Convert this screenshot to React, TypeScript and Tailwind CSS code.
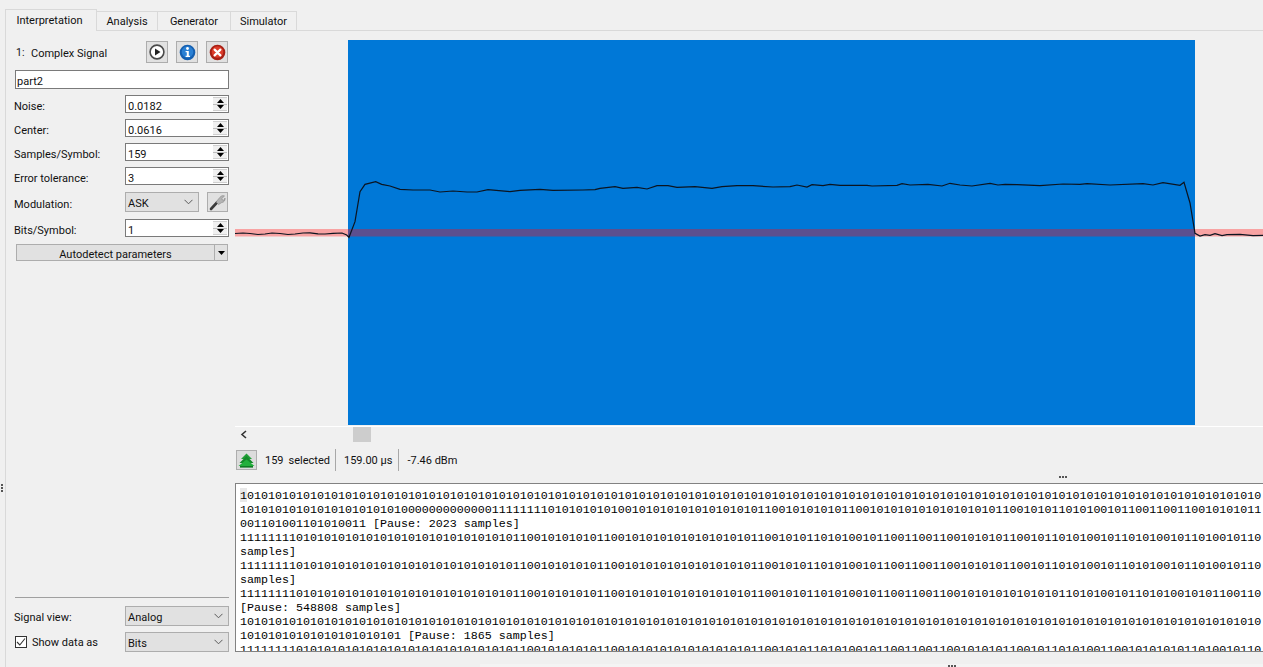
const uiFont = "[font-family:Roboto,sans-serif] text-[11px] leading-none text-[#111]";

const r = (s: string, n: number) => s.repeat(n);
const head = "11111111" + r("01", 15) + "0" + "11" + "00" + "101010101" + "1" + "00";
const mid = r("10", 9) + "1" + "1001010110101001";
const lines = [
  r("10", 73),
  r("10", 12) + "000000000000" + "1111111" + r("10", 6) + r("01", 10) + "100" + "10101010" + "1100" + r("10", 9) + "1" + "1001010110101001011001100110010101011",
  "001101001101010011 [Pause: 2023 samples]",
  head + mid + "01100110011001010101100101101010010110101001011010010110",
  "samples]",
  head + mid + "01100110011001010101100101101010010110101001011010010110",
  "samples]",
  head + mid + "01100110011001010101010101011010100101101010010101100110",
  "[Pause: 548808 samples]",
  r("10", 73),
  "10101010101010101010101 [Pause: 1865 samples]",
  head + mid + "01100110011001010101100101101010011001010101011010010110",
];

const trace = [
  [235, 233.5], [243, 233], [250, 233.5], [258, 234.5], [265, 234], [272, 233], [280, 233.5], [288, 234.5], [295, 234], [303, 233], [310, 232.8], [318, 233.8], [325, 234], [333, 233.4], [342, 233], [346.7, 235], [349, 237.3],
  [355, 221.7], [360, 191.7], [365, 184.3], [375.7, 181.7], [381.7, 184.3], [390, 186], [400, 189.3], [413, 190], [430, 190], [440, 192], [453, 191], [467, 192], [477, 192], [488, 189.7], [510, 191.7],
  [520, 190.3], [540, 189.3], [553, 190.3], [583, 190], [595, 189.7], [600, 188.3], [615, 186.7], [623, 188.3], [637, 187.3], [647, 189], [657, 185.7], [668, 185.7], [677, 187.3], [695, 186.7], [712, 188.3], [722, 186.7], [737, 185.7], [753, 185.7], [773, 187], [790, 186.7], [797, 185], [807, 187],
  [812, 184.7], [823, 185.7], [830, 184.3], [840, 185.3], [867, 185.3], [872, 186], [897, 185.3], [902, 183.7], [910, 185], [928, 184.3], [942, 186], [950, 183.3], [960, 185], [972, 186], [990, 183.3], [998, 185], [1005, 184.4], [1017, 184.7], [1040, 185.7], [1063, 184], [1080, 184.3],
  [1087, 183.7], [1110, 185], [1143, 183.7], [1153, 185], [1163, 182.7], [1180, 185.3], [1184, 182.3], [1190, 203], [1195, 233.3], [1200, 236], [1205, 234.7], [1210, 235.3], [1215, 233.7], [1222, 235.7], [1227, 234.7], [1240, 234.3], [1253, 235.7], [1263, 235.3],
];
const tracePath = trace.map((p, i) => (i === 0 ? "M" : "L") + p[0] + " " + p[1]).join(" ");

function Tri({ down }: { down?: boolean }) {
  return (
    <svg width="7" height="4" viewBox="0 0 7 4" className="block">
      <path d={down ? "M0 0H7L3.5 4Z" : "M0 4H7L3.5 0Z"} fill="#000" />
    </svg>
  );
}

function Spin({ label, value, className }: { label: string; value: string; className: string }) {
  return (
    <div className={"flex items-center justify-between h-[18px] " + className}>
      <span className="pt-[5px]">{label}</span>
      <div className="w-[104px] h-full border border-[#7a7a7a] bg-white flex items-center pl-[2px]">
        <span className="flex-1 pt-[4px]">{value}</span>
        <div className="w-[14px] h-[14px] mr-[1px] flex flex-col border-y border-[#cfcfcf] bg-[#f0f0f0]">
          <div className="flex-1 flex items-center justify-center border-b border-[#bdbdbd]"><Tri /></div>
          <div className="flex-1 flex items-center justify-center"><Tri down /></div>
        </div>
      </div>
    </div>
  );
}

function Chevron() {
  return (
    <svg width="9" height="6" viewBox="0 0 9 6" className="block">
      <path d="M0.5 0.8L4.5 4.8L8.5 0.8" fill="none" stroke="#5a5a5a" strokeWidth="1" />
    </svg>
  );
}

function Combo({ value, className }: { value: string; className: string }) {
  return (
    <div className={"h-[20px] border border-[#adadad] bg-[#e1e1e1] flex items-center justify-between pl-[2px] pr-[5px] " + className}>
      <span className="pt-[3px]">{value}</span>
      <Chevron />
    </div>
  );
}

function IconBtn({ children, className }: { children: React.ReactNode; className?: string }) {
  return (
    <div className={"w-[22px] h-[22px] border border-[#adadad] bg-[#e1e1e1] flex items-center justify-center " + (className ?? "")}>
      {children}
    </div>
  );
}

function Tab({ label, w }: { label: string; w: string }) {
  return (
    <div className={"h-[20px] pt-px border-t border-r border-b border-[#d9d9d9] flex items-center justify-center " + w}>{label}</div>
  );
}

function Dots({ className }: { className: string }) {
  return <div className={"absolute flex gap-px " + className}>
    <i className="w-[2px] h-[2px] bg-[#555]" /><i className="w-[2px] h-[2px] bg-[#555]" /><i className="w-[2px] h-[2px] bg-[#555]" />
  </div>;
}

export default function App() {
  return (
    <div className={"relative w-[1263px] h-[667px] overflow-hidden bg-[#f0f0f0] flex flex-col " + uiFont}>
      <div className="h-[31px] flex items-end pl-[5px] shrink-0">
        <div className="w-[92px] h-[22px] pr-[3px] border border-b-0 border-[#d9d9d9] bg-[#f0f0f0] flex items-center justify-center">Interpretation</div>
        <Tab label="Analysis" w="w-[61px]" />
        <Tab label="Generator" w="w-[73px]" />
        <Tab label="Simulator" w="w-[66px]" />
        <div className="flex-1 h-px bg-[#d9d9d9]" />
      </div>

      <div className="flex-1 min-h-0 flex ml-[5px] border-l border-[#d9d9d9]">
        {/* left panel */}
        <div className="w-[229px] shrink-0 pl-[8px] pr-[6px] flex flex-col pb-[15px]">
          <div className="flex items-center h-[22px] mt-[10px]">
            <span className="ml-[2px] w-[15px] text-[10.5px] pt-[3px]">1:</span>
            <span className="pt-[3px]">Complex Signal</span>
            <div className="ml-auto flex gap-[8px] mr-[1px]">
              <IconBtn>
                <svg width="16" height="16" viewBox="0 0 16 16">
                  <circle cx="8" cy="8" r="6.9" fill="#fff" stroke="#4a4a4a" strokeWidth="1.6" />
                  <path d="M6 4.4L11.5 8L6 11.6Z" fill="#222" />
                </svg>
              </IconBtn>
              <IconBtn>
                <svg width="17" height="17" viewBox="0 0 17 17">
                  <circle cx="8.5" cy="8.5" r="7.8" fill="#155fb0" />
                  <circle cx="8.5" cy="8" r="5.8" fill="#2a80d4" />
                  <circle cx="8.5" cy="4.5" r="1.4" fill="#fff" />
                  <path d="M6.6 7H9.8V11.8H11V13H6.6V11.8H7.8V8.2H6.6Z" fill="#fff" />
                </svg>
              </IconBtn>
              <IconBtn>
                <svg width="17" height="17" viewBox="0 0 17 17">
                  <circle cx="8.5" cy="8.5" r="7.8" fill="#a81f14" />
                  <circle cx="8.5" cy="8" r="5.8" fill="#dc3c2a" />
                  <path d="M5.6 5.6L11.4 11.4M11.4 5.6L5.6 11.4" stroke="#fff" strokeWidth="2.2" strokeLinecap="round" />
                </svg>
              </IconBtn>
            </div>
          </div>

          <div className="mt-[7px] ml-px h-[19px] border border-[#7a7a7a] bg-white flex items-center pl-[1px] pt-[4px]">part2</div>

          <Spin label="Noise:" value="0.0182" className="mt-[6px]" />
          <Spin label="Center:" value="0.0616" className="mt-[6px]" />
          <Spin label="Samples/Symbol:" value="159" className="mt-[6px]" />
          <Spin label="Error tolerance:" value="3" className="mt-[6px]" />

          <div className="flex items-center h-[20px] mt-[7px]">
            <span className="w-[111px] pt-[5px]">Modulation:</span>
            <Combo value="ASK" className="w-[74px]" />
            <div className="ml-[8px] w-[21px] h-[20px] border border-[#adadad] bg-[#e1e1e1] flex items-center justify-center">
              <svg width="17" height="17" viewBox="0 0 17 17">
                <path d="M2 15L8 8.5" stroke="#3a3a3a" strokeWidth="2.6" strokeLinecap="round" />
                <path d="M7 8L11 3.2C12 1.8 14 1.2 15.5 2L12.8 4.6L13.5 6L15 6.2L16 4C16.4 6.4 15 8.4 12.6 8.6L9.6 10.6Z" fill="#b4b4b4" stroke="#777" strokeWidth="0.5" />
              </svg>
            </div>
          </div>

          <Spin label="Bits/Symbol:" value="1" className="mt-[7px]" />

          <div className="mt-[7px] ml-[2px] mr-px h-[17px] border border-[#adadad] bg-[#e1e1e1] flex items-center">
            <span className="flex-1 text-center pt-[4px]">Autodetect parameters</span>
            <div className="w-[13px] h-full border-l border-[#adadad] flex items-center justify-center"><Tri down /></div>
          </div>

          <div className="mt-auto ml-px h-px bg-[#a0a0a0]" />
          <div className="mt-[8px] flex items-center justify-between h-[20px]">
            <span className="pt-[2px]">Signal view:</span>
            <Combo value="Analog" className="w-[104px]" />
          </div>
          <div className="mt-[6px] flex items-center h-[20px]">
            <div className="ml-px w-[12px] h-[12px] border border-[#333] bg-white flex items-center justify-center">
              <svg width="10" height="10" viewBox="0 0 10 10">
                <path d="M1 5L3.8 8L9 1.5" fill="none" stroke="#333" strokeWidth="1.1" />
              </svg>
            </div>
            <span className="ml-[5px]">Show data as</span>
            <Combo value="Bits" className="w-[104px] ml-auto" />
          </div>
        </div>

        {/* right panel */}
        <div className="flex-1 min-w-0 flex flex-col pt-[9px]">
          <svg width="1028" height="385" viewBox="235 40 1028 385" className="block shrink-0">
            <rect x="235" y="229" width="1028" height="7.5" fill="#f8a3a3" />
            <rect x="348" y="40" width="847" height="385" fill="#0078d7" />
            <rect x="348" y="229" width="847" height="7.5" fill="#5c4f8f" />
            <path d={tracePath} fill="none" stroke="#0b1420" strokeWidth="1.2" />
          </svg>
          <div className="mt-px h-px bg-white shrink-0" />
          <div className="h-[15px] shrink-0 flex items-center pl-[5px] relative">
            <svg width="8" height="9" viewBox="0 0 8 9" className="block">
              <path d="M6 1L2 4.5L6 8" fill="none" stroke="#333" strokeWidth="1.6" />
            </svg>
            <div className="ml-[105px] w-[18px] h-[15px] bg-[#cdcdcd]" />
          </div>
          <div className="mt-[7px] h-[22px] shrink-0 flex items-center">
            <div className="ml-px w-[21px] h-[20px] border border-[#adadad] bg-[#dcdcdc] flex items-center justify-center">
              <svg width="17" height="15" viewBox="0 0 17 15">
                <path d="M8.5 0.5L14 6H3Z" fill="#1f9e35" />
                <path d="M8.5 3L15.5 10H1.5Z" fill="#148a2a" />
                <path d="M8.5 6.5L16.5 13H0.5Z" fill="#23b03c" />
                <rect x="2" y="13" width="13" height="1.6" fill="#0f7a24" />
              </svg>
            </div>
            <span className="ml-[8px] pt-px">159</span>
            <span className="ml-[5px] pt-px">selected</span>
            <div className="ml-[5px] w-px h-[22px] bg-[#a8a8a8]" />
            <span className="ml-[8px] pt-px">159.00 µs</span>
            <div className="ml-[6px] w-px h-[22px] bg-[#a8a8a8]" />
            <span className="ml-[8px] pt-px">-7.46 dBm</span>
          </div>
          <div className="mt-[12px] h-[169px] shrink-0 border-y border-l border-[#828282] bg-white pl-[4px] pt-[5px] overflow-hidden relative">
            <div className="absolute left-[4px] top-[4px] w-[7px] h-[14px] bg-[#e8e8e8]" />
            <div className="relative font-['Liberation_Mono',monospace] text-[11.67px] leading-[14px] text-black whitespace-pre">
              {lines.map((l, i) => (
                <div key={i} className="h-[14px]">{l}</div>
              ))}
            </div>
          </div>
          <div className="flex-1" />
          <div className="h-[3px] ml-[245px] bg-[#f4f4f4] shrink-0" />
        </div>
      </div>

      <Dots className="left-[1059px] top-[476px]" />
      <Dots className="left-[948px] top-[665px]" />
      <div className="absolute left-[1px] top-[484px] flex flex-col gap-px">
        <i className="w-[2px] h-[2px] bg-[#555]" /><i className="w-[2px] h-[2px] bg-[#555]" /><i className="w-[2px] h-[2px] bg-[#555]" />
      </div>
    </div>
  );
}
